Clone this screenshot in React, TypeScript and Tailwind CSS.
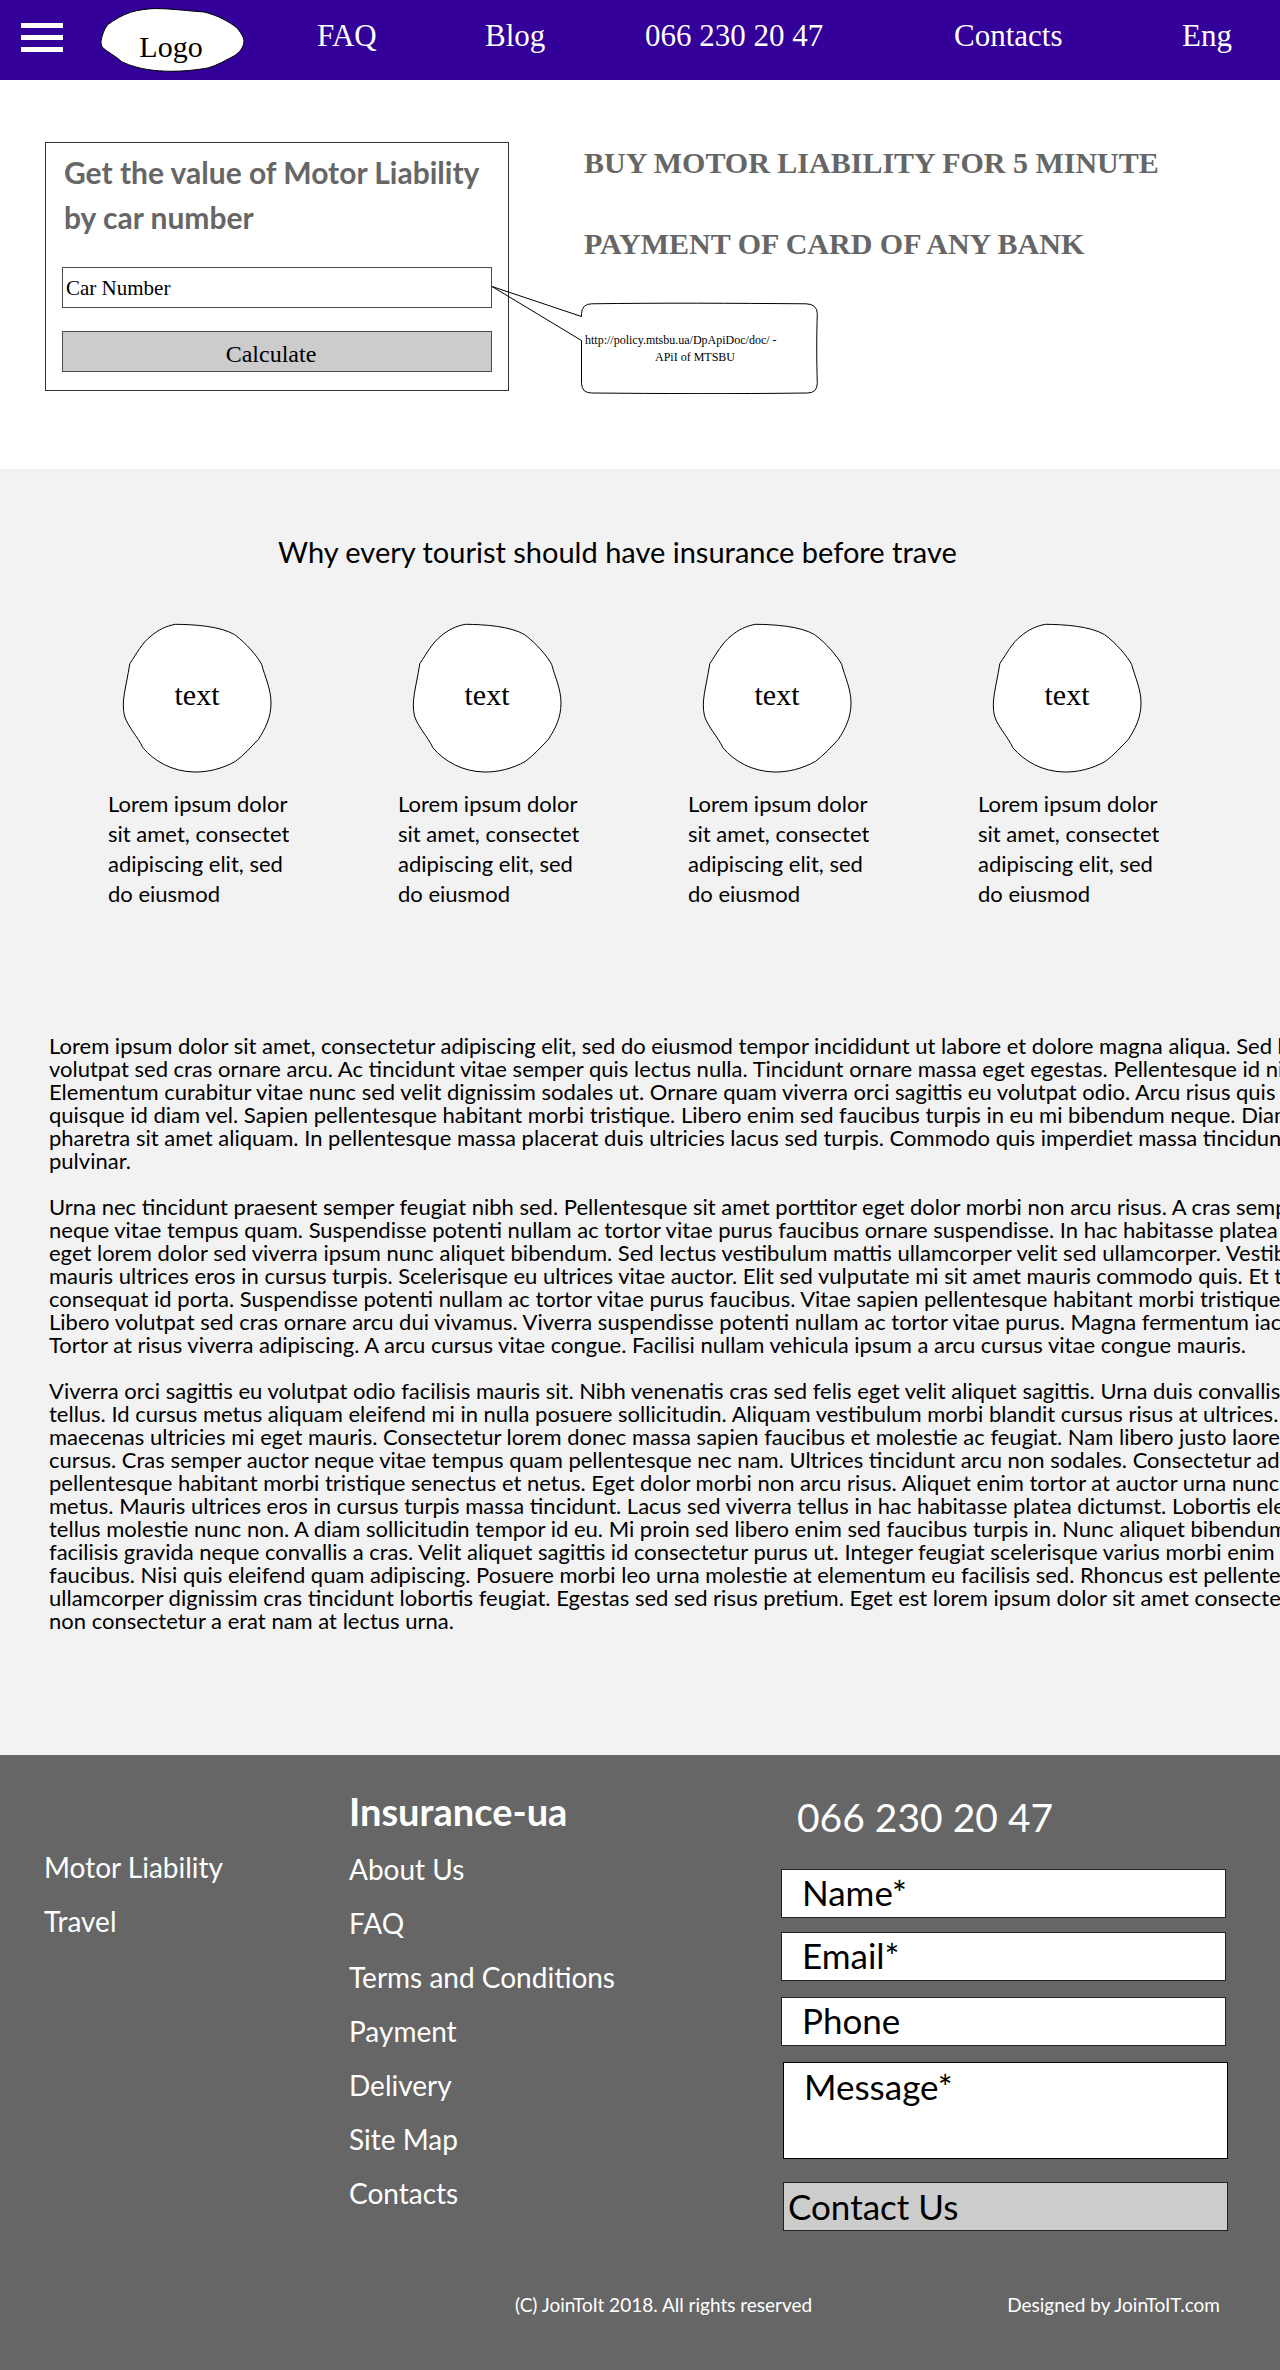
const serif = "font-['Liberation_Serif',serif]";

const navItems = ["FAQ", "Blog", "066 230 20 47", "Contacts", "Eng"];

const columnLines = ["Lorem ipsum dolor", "sit amet, consectetur", "adipiscing elit, sed", "do eiusmod"];

const paragraphs: string[][] = [
  [
    "Lorem ipsum dolor sit amet, consectetur adipiscing elit, sed do eiusmod tempor incididunt ut labore et dolore magna aliqua. Sed blandit",
    "volutpat sed cras ornare arcu. Ac tincidunt vitae semper quis lectus nulla. Tincidunt ornare massa eget egestas. Pellentesque id nibh",
    "Elementum curabitur vitae nunc sed velit dignissim sodales ut. Ornare quam viverra orci sagittis eu volutpat odio. Arcu risus quis varius",
    "quisque id diam vel. Sapien pellentesque habitant morbi tristique. Libero enim sed faucibus turpis in eu mi bibendum neque. Diam",
    "pharetra sit amet aliquam. In pellentesque massa placerat duis ultricies lacus sed turpis. Commodo quis imperdiet massa tincidunt",
    "pulvinar.",
  ],
  [
    "Urna nec tincidunt praesent semper feugiat nibh sed. Pellentesque sit amet porttitor eget dolor morbi non arcu risus. A cras semper",
    "neque vitae tempus quam. Suspendisse potenti nullam ac tortor vitae purus faucibus ornare suspendisse. In hac habitasse platea dictumst",
    "eget lorem dolor sed viverra ipsum nunc aliquet bibendum. Sed lectus vestibulum mattis ullamcorper velit sed ullamcorper. Vestibulum",
    "mauris ultrices eros in cursus turpis. Scelerisque eu ultrices vitae auctor. Elit sed vulputate mi sit amet mauris commodo quis. Et tortor",
    "consequat id porta. Suspendisse potenti nullam ac tortor vitae purus faucibus. Vitae sapien pellentesque habitant morbi tristique",
    "Libero volutpat sed cras ornare arcu dui vivamus. Viverra suspendisse potenti nullam ac tortor vitae purus. Magna fermentum iaculis",
    "Tortor at risus viverra adipiscing. A arcu cursus vitae congue. Facilisi nullam vehicula ipsum a arcu cursus vitae congue mauris.",
  ],
  [
    "Viverra orci sagittis eu volutpat odio facilisis mauris sit. Nibh venenatis cras sed felis eget velit aliquet sagittis. Urna duis convallis convallis",
    "tellus. Id cursus metus aliquam eleifend mi in nulla posuere sollicitudin. Aliquam vestibulum morbi blandit cursus risus at ultrices. Id eu",
    "maecenas ultricies mi eget mauris. Consectetur lorem donec massa sapien faucibus et molestie ac feugiat. Nam libero justo laoreet",
    "cursus. Cras semper auctor neque vitae tempus quam pellentesque nec nam. Ultrices tincidunt arcu non sodales. Consectetur adipiscing",
    "pellentesque habitant morbi tristique senectus et netus. Eget dolor morbi non arcu risus. Aliquet enim tortor at auctor urna nunc",
    "metus. Mauris ultrices eros in cursus turpis massa tincidunt. Lacus sed viverra tellus in hac habitasse platea dictumst. Lobortis elementum",
    "tellus molestie nunc non. A diam sollicitudin tempor id eu. Mi proin sed libero enim sed faucibus turpis in. Nunc aliquet bibendum enim",
    "facilisis gravida neque convallis a cras. Velit aliquet sagittis id consectetur purus ut. Integer feugiat scelerisque varius morbi enim nunc",
    "faucibus. Nisi quis eleifend quam adipiscing. Posuere morbi leo urna molestie at elementum eu facilisis sed. Rhoncus est pellentesque",
    "ullamcorper dignissim cras tincidunt lobortis feugiat. Egestas sed sed risus pretium. Eget est lorem ipsum dolor sit amet consectetur",
    "non consectetur a erat nam at lectus urna.",
  ],
];

const productLinks = ["Motor Liability", "Travel"];
const siteLinks = ["About Us", "FAQ", "Terms and Conditions", "Payment", "Delivery", "Site Map", "Contacts"];
const contactFields = [
  { label: "Name*", type: "text", spacing: "mt-[25px]" },
  { label: "Email*", type: "email", spacing: "mt-[14px]" },
  { label: "Phone", type: "tel", spacing: "mt-4" },
];

function Header() {
  return (
    <header className={`${serif} flex h-20 bg-[#330099] pl-[21px] text-[31px] text-white`}>
      <button type="button" aria-label="Open menu" className="mt-[23px] flex h-[29px] w-[42px] flex-col justify-between">
        <span className="h-[5px] w-full bg-white" />
        <span className="h-[5px] w-full bg-white" />
        <span className="h-[5px] w-full bg-white" />
      </button>
      <a href="#home" className="relative ml-[37px] mt-2 h-16 w-[145px] text-[30px] leading-[78px] text-black">
        <svg aria-hidden="true" viewBox="0 0 145 64" className="absolute inset-0 size-full">
          <path
            d="M55 .5C72 .5 88 3 104 4C117 7 130 14 137 20C142 26 144 30 144 34C143 40 140 44 134 48C126 52 118 57 108 60C96 62 84 63.3 71 63.3C56 63 40 62 22 54C16 48 7 44 2 39C1 36 1 34 1 33C2 27 4 22 7.3 17C14 12 22 7 30.6 4.3C38 2 46 1 55 .5Z"
            fill="#fff"
            stroke="#000"
          />
        </svg>
        <span className="relative block pr-[3px] text-center">Logo</span>
      </a>
      <nav className="ml-[72px] grid flex-1 grid-cols-[168fr_160fr_309fr_228fr_98fr] leading-[71px]">
        {navItems.map((item) => (
          <a key={item} href={`#${item}`} className="whitespace-nowrap">
            {item}
          </a>
        ))}
      </nav>
    </header>
  );
}

function Hero() {
  return (
    <section className="flex h-[389px] items-start gap-[72px] bg-white pl-[45px]">
      <form className="mt-[62px] w-[464px] border border-[#333] px-4 pb-[18px] pt-[7px]">
        <h2 className="whitespace-nowrap pl-[2px] text-[30px] font-bold leading-[45px] text-[#666]">
          Get the value of Motor Liability
          <br />
          by car number
        </h2>
        <input
          aria-label="Car Number"
          placeholder="Car Number"
          className={`${serif} mt-[27px] block h-[41px] w-full border border-[#4d4d4d] bg-white pl-[3px] pt-[2px] text-[21px] text-black placeholder:text-black placeholder:opacity-100`}
        />
        <button
          type="button"
          className={`${serif} mt-[23px] block h-[41px] w-full border border-[#4d4d4d] bg-[#ccc] pr-3 pt-1 text-center text-2xl leading-8 text-black`}
        >
          Calculate
        </button>
      </form>
      <div className={`${serif} pt-[42px]`}>
        <div className="whitespace-nowrap pl-[3px] text-[30px] font-bold leading-[81px] text-[#666]">
          <h1>BUY MOTOR LIABILITY FOR 5 MINUTE</h1>
          <h2>PAYMENT OF CARD OF ANY BANK</h2>
        </div>
        <aside className="relative mt-[19px] h-[91px] w-[237px] pl-1 pr-[13px] pt-[29px] text-xs leading-[17px] text-black">
          <svg
            aria-hidden="true"
            viewBox="-90 -20 327 111"
            className="pointer-events-none absolute -left-[90px] -top-5 h-[111px] w-[327px]"
            fill="none"
            stroke="#000"
          >
            <path d="M.5 13.500V10.500Q1 1 10.500 .8C80 -.2 150 .2 225 .8Q236 1 236.300 10.500C235.500 35 235.600 60 236.300 80.500Q236 90 226.500 90C150 91 80 90.600 10.500 90Q1 90 .5 80.500V37.500L-89 -16.500Z" />
          </svg>
          <p className="whitespace-nowrap">http://policy.mtsbu.ua/DpApiDoc/doc/ -</p>
          <p className="text-center">APiI of MTSBU</p>
        </aside>
      </div>
    </section>
  );
}

function Reason() {
  return (
    <article>
      <div className="relative ml-[14px] size-[150px]">
        <svg aria-hidden="true" viewBox="0 0 150 150" className="absolute inset-0 size-full">
          <path
            d="M53.500 1.300C72 1.500 98 3 112.700 11.700C125 21 135 33 139.600 41.300C143 54 149 66 149 80C149 95 143 106 136.400 116.300C129 124 122 132 113.500 138.300C100 146 85 149.300 72 149C50 148.500 32 138 20.900 124.700C16 114 6 104 2.500 93C-1 78 4 65 7.800 40.700C15 30 20 20 29 13C36 7 44 3 53.500 1.300Z"
            fill="#fff"
            stroke="#000"
          />
        </svg>
        <span className={`${serif} absolute inset-0 flex items-center justify-center pb-2 text-[30px]`}>text</span>
      </div>
      <p className="mt-4 w-[181px] overflow-hidden whitespace-nowrap text-[22px] leading-[30px]">
        {columnLines.map((line) => (
          <span key={line} className="block">
            {line}
          </span>
        ))}
      </p>
    </article>
  );
}

function Content() {
  return (
    <main className="overflow-hidden bg-[#f2f2f2] pb-[123px] pt-[62px] text-black">
      <h2 className="ml-[278px] w-[679px] overflow-hidden whitespace-nowrap text-[29px] leading-[42px]">
        Why every tourist should have insurance before traveling
      </h2>
      <div className="mt-[50px] grid grid-cols-4 pl-[108px] pr-3">
        <Reason />
        <Reason />
        <Reason />
        <Reason />
      </div>
      <div className="mt-[125px] flex flex-col gap-[23px] whitespace-nowrap pl-[49px] text-[22px] leading-[23px]">
        {paragraphs.map((lines) => (
          <p key={lines[0]}>
            {lines.map((line) => (
              <span key={line} className="block">
                {line}
              </span>
            ))}
          </p>
        ))}
      </div>
    </main>
  );
}

function LinkList({ items }: { items: string[] }) {
  return (
    <ul className="text-[28px] leading-[54px]">
      {items.map((item) => (
        <li key={item}>
          <a href={`#${item}`}>{item}</a>
        </li>
      ))}
    </ul>
  );
}

function Footer() {
  return (
    <footer className="bg-[#666] pb-[52px] text-white">
      <div className="grid grid-cols-[305fr_432fr_499fr] pl-11">
        <div className="pt-[85px]">
          <LinkList items={productLinks} />
        </div>
        <div className="pt-[29px]">
          <h2 className="mb-1 text-[38px] font-bold leading-[54px]">Insurance-ua</h2>
          <LinkList items={siteLinks} />
        </div>
        <form className="pr-[51px] pt-[35px] text-[35px]">
          <p className="pl-4 text-[39px] leading-[54px]">066 230 20 47</p>
          {contactFields.map((field) => (
            <input
              key={field.label}
              type={field.type}
              aria-label={field.label}
              placeholder={field.label}
              className={`${field.spacing} block h-[49px] w-[445px] border border-[#222] bg-white pb-[2px] pl-5 text-black placeholder:text-black placeholder:opacity-100`}
            />
          ))}
          <textarea
            aria-label="Message*"
            placeholder="Message*"
            className="ml-[2px] mt-4 block h-[97px] w-[445px] resize-none border border-black bg-white pl-5 leading-[46px] text-black placeholder:text-black placeholder:opacity-100"
          />
          <button
            type="button"
            className="ml-[2px] mt-[23px] block h-[49px] w-[445px] border border-[#222] bg-[#ccc] pb-[2px] pl-1 text-left leading-[44px] text-black"
          >
            Contact Us
          </button>
        </form>
      </div>
      <div className="mt-[60px] flex justify-between pl-[515px] pr-[60px] text-[19px] leading-7">
        <p>(C) JoinToIt 2018. All rights reserved</p>
        <p>Designed by JoinToIT.com</p>
      </div>
    </footer>
  );
}

export default function App() {
  return (
    <div className="overflow-hidden font-['Lato',sans-serif]">
      <Header />
      <Hero />
      <Content />
      <Footer />
    </div>
  );
}
